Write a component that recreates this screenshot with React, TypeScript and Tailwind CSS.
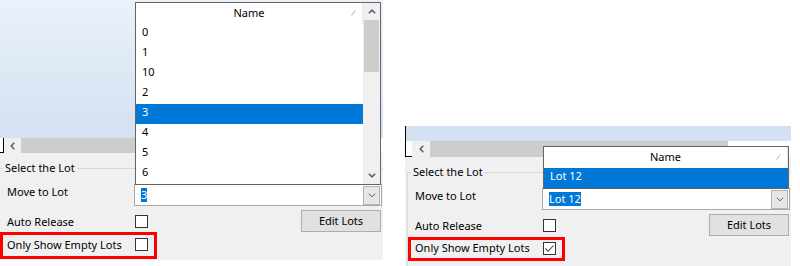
import React from "react";

type PanelProps = {
  side: "left" | "right";
  items: string[];
  selected: string;
  value: string;
  checked: boolean;
};

function ChevronUp() {
  return (
    <svg width="8" height="5" viewBox="0 0 8 5">
      <path d="M0.8 4.3 L4 1.2 L7.2 4.3" fill="none" stroke="#606060" strokeWidth="1.6" />
    </svg>
  );
}

function ChevronDown({ thin }: { thin?: boolean }) {
  return (
    <svg width="8" height="5" viewBox="0 0 8 5">
      <path
        d="M0.8 0.7 L4 3.8 L7.2 0.7"
        fill="none"
        stroke="#606060"
        strokeWidth={thin ? 1 : 1.6}
      />
    </svg>
  );
}

function ChevronLeft() {
  return (
    <svg width="5" height="8" viewBox="0 0 5 8">
      <path d="M4.3 0.8 L1.2 4 L4.3 7.2" fill="none" stroke="#606060" strokeWidth="1.6" />
    </svg>
  );
}

function Checkbox({ checked }: { checked?: boolean }) {
  return (
    <div className="w-[13px] h-[13px] border border-[#333333] bg-white flex items-center justify-center">
      {checked && (
        <svg width="11" height="11" viewBox="0 0 11 11">
          <path d="M1.5 5.5 L4.2 8.3 L9.5 2.5" fill="none" stroke="#444444" strokeWidth="1.1" />
        </svg>
      )}
    </div>
  );
}

// dropdown list that opens above the combo box
function Popup({ items, selected, scroll }: { items: string[]; selected: string; scroll: boolean }) {
  return (
    <div className="absolute bottom-full left-0 w-full border border-[#646464] bg-white flex">
      <div className="flex-1 flex flex-col">
        <div className="h-[21px] grid grid-cols-[16px_1fr_16px] border-r border-[#e8e8e8]">
          <span />
          <span className="text-center pt-[2px] leading-[16px]">Name</span>
          <span className="pt-[7px] pl-[5px]">
            <svg width="5" height="6" viewBox="0 0 5 6">
              <path d="M0.5 5.5 L4.5 0.5" stroke="#b0b0b0" strokeWidth="1" />
            </svg>
          </span>
        </div>
        {items.map((item) => (
          <div
            key={item}
            className={`h-[20px] leading-[16px] pl-[6px] ${
              item === selected ? "bg-[#0078d7] text-white" : "text-black"
            }`}
          >
            {item}
          </div>
        ))}
      </div>
      {scroll && (
        <div className="w-[17px] bg-[#f0f0f0] flex flex-col">
          <div className="h-[17px] flex items-center justify-center">
            <ChevronUp />
          </div>
          <div className="h-[52px] mx-[1px] bg-[#cdcdcd]" />
          <div className="flex-1" />
          <div className="h-[17px] flex items-center justify-center">
            <ChevronDown />
          </div>
        </div>
      )}
    </div>
  );
}

function Panel({ side, items, selected, value, checked }: PanelProps) {
  const isLeft = side === "left";

  return (
    <div className={`w-[386px] h-[266px] flex flex-col ${isLeft ? "-ml-[3px]" : "ml-[22px]"}`}>
      {/* Window area above the grid */}
      {isLeft ? (
        <div className="h-[138px] bg-linear-to-b from-[#eaf1fa] to-[#d3e1f1]" />
      ) : (
        <>
          <div className="h-[126px] bg-white" />
          <div className="h-[15px] bg-[#d4e1f2] border-l border-black" />
        </>
      )}

      {/* Horizontal scroll bar */}
      <div className={`flex ${isLeft ? "h-[15px]" : "h-[16px]"}`}>
        {isLeft ? (
          <>
            <div className="w-[3px] bg-white" />
            <div className="w-[4px] bg-white border-r border-b border-black" />
            <div className="w-[17px] bg-[#f0f0f0] flex items-center justify-center">
              <ChevronLeft />
            </div>
            <div className="w-[299px] bg-[#cdcdcd]" />
          </>
        ) : (
          <>
            <div className="w-[7px] bg-white border-l border-b border-black" />
            <div className="w-[18px] bg-[#f0f0f0] flex items-center justify-center">
              <ChevronLeft />
            </div>
            <div className="w-[298px] bg-[#cdcdcd]" />
          </>
        )}
        <div className="flex-1 bg-white" />
      </div>

      {/* Lot selection group */}
      <div className={`bg-[#f0f0f0] pt-[5px] ${isLeft ? "h-[107px]" : "flex-1"}`}>
        <fieldset className="ml-[2px] h-full border-t border-l border-[#d8d8d8]">
          <legend className="ml-[3px] px-[2px] leading-[20px] text-black">Select the Lot</legend>

          <div className="mt-[6px] flex items-start">
            <div className="w-[134px] pl-[7px] leading-[16px]">Move to Lot</div>
            <div className="relative w-[248px] h-[22px] border border-[#a8a8a8] bg-white flex items-center">
              <Popup items={items} selected={selected} scroll={isLeft} />
              <span className="ml-[6px] leading-[14px] bg-[#0078d7] text-white">{value}</span>
              <div className="ml-auto mr-[1px] w-[17px] h-[19px] border border-[#b4b4b4] bg-[#e6e6e6] flex items-center justify-center">
                <ChevronDown thin />
              </div>
            </div>
          </div>

          <div className="mt-[4px] h-[22px] flex items-start">
            <div className="w-[134px] pl-[7px] mt-[4px] leading-[16px]">Auto Release</div>
            <div className="ml-[1px] mt-[5px]">
              <Checkbox />
            </div>
            <button className="ml-auto mr-[2px] w-[80px] h-[22px] border border-[#adadad] bg-[#e1e1e1] leading-[16px] text-black">
              Edit Lots
            </button>
          </div>

          <div
            className={`w-[157px] border-[3px] border-[#ff0000] flex items-start ${
              isLeft ? "h-[27px]" : "mt-[1px] h-[24px]"
            }`}
          >
            <div className={`w-[132px] pl-[4px] leading-[16px] ${isLeft ? "mt-[2px]" : "mt-0"}`}>
              Only Show Empty Lots
            </div>
            <div className={isLeft ? "mt-[3px]" : "mt-[2px]"}>
              <Checkbox checked={checked} />
            </div>
          </div>
        </fieldset>
      </div>
    </div>
  );
}

export default function App() {
  return (
    <div className="w-[800px] h-[266px] bg-white flex overflow-hidden font-['Noto_Sans',sans-serif] text-[11px] text-black">
      <Panel
        side="left"
        items={["0", "1", "10", "2", "3", "4", "5", "6"]}
        selected="3"
        value="3"
        checked={false}
      />
      <Panel side="right" items={["Lot 12"]} selected="Lot 12" value="Lot 12" checked />
    </div>
  );
}
